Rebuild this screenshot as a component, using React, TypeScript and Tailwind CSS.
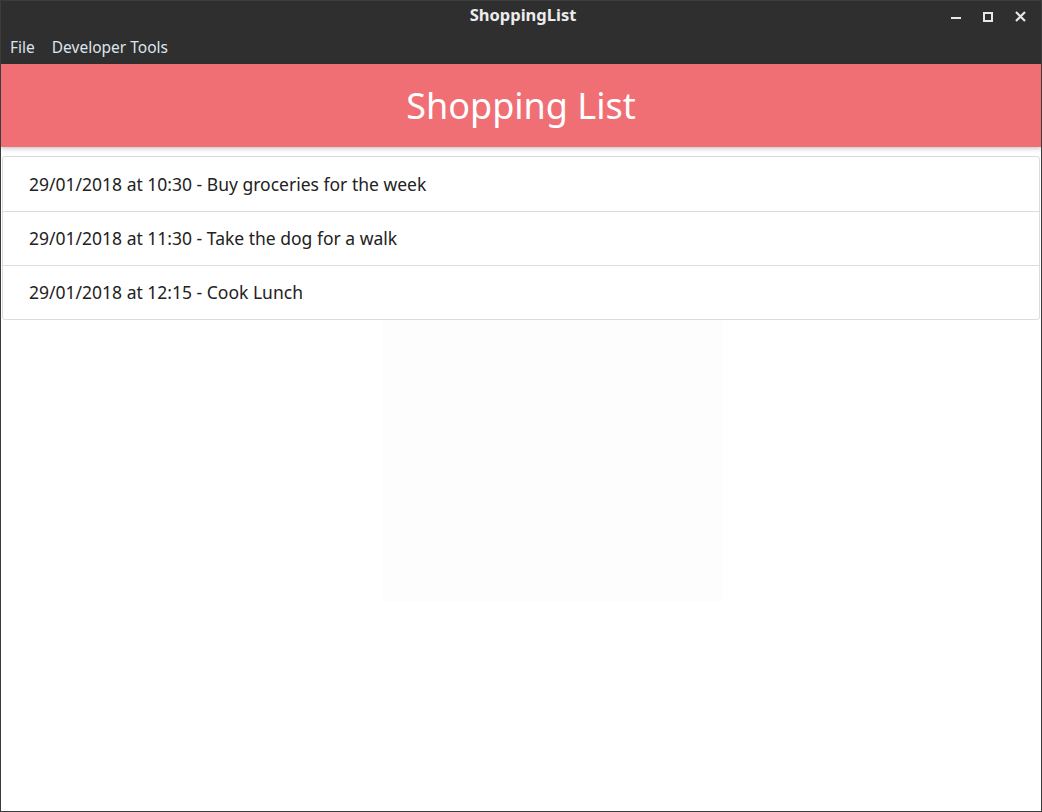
import React from "react";

const ITEMS = [
  "29/01/2018 at 10:30 - Buy groceries for the week",
  "29/01/2018 at 11:30 - Take the dog for a walk",
  "29/01/2018 at 12:15 - Cook Lunch",
];

const font = { fontFamily: '"Noto Sans", "Open Sans", sans-serif' };

const TitleBar = () => (
  <div className="h-[31px] bg-[#2f2f2f] flex items-center relative">
    <div className="flex-1 text-center font-bold text-[16.5px] text-[#ececec] pl-[4px] -mt-[2px]">
      ShoppingList
    </div>
    <div className="absolute right-0 top-0 h-[31px] flex items-center gap-[22px] pr-[15px]">
      <div className="w-[10px] h-[2px] bg-[#e8e8e8] mt-[2px]" />
      <div className="w-[10px] h-[10px] border-2 border-[#e8e8e8]" />
      <svg width="11" height="11" viewBox="0 0 11 11">
        <path d="M1 1 L10 10 M10 1 L1 10" stroke="#e8e8e8" strokeWidth="2.2" />
      </svg>
    </div>
  </div>
);

const MenuBar = () => (
  <div className="h-8 bg-[#2f2f2f] flex items-center gap-[17px] px-[9px] text-[15.5px] text-[#dde4ec]">
    <span>File</span>
    <span>Developer Tools</span>
  </div>
);

const App = () => {
  return (
    <div
      className="w-[1042px] h-[812px] bg-white border border-[#3c3c3c] flex flex-col overflow-hidden relative"
      style={font}
    >
      {/* faint ghost panel left in the capture */}
      <div className="absolute left-[381px] top-[270px] w-[341px] h-[331px] rounded-[6px] bg-[#fdfdfd] pointer-events-none" />
      <TitleBar />
      <MenuBar />
      <div className="h-[83px] bg-[#ef6f74] flex items-center justify-center text-white text-[36px] shadow-[0_2px_4px_rgba(0,0,0,0.2)] relative z-10">
        Shopping List
      </div>
      <div className="mt-[9px] mx-[1px] border border-[#dcdcdc] rounded-[3px] bg-white relative">
        {ITEMS.map((item, i) => (
          <div
            key={i}
            className={
              "h-[54px] flex items-center pl-[26px] text-[17.5px] text-[#222] " +
              (i > 0 ? "border-t border-[#dcdcdc]" : "")
            }
          >
            {item}
          </div>
        ))}
      </div>
    </div>
  );
};

export default App;
